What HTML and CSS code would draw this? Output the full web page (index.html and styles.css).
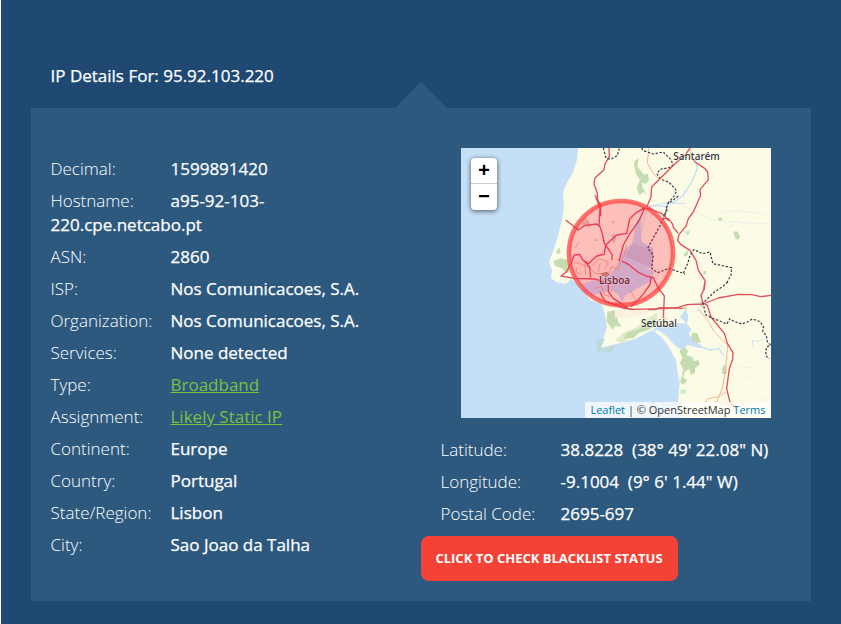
FILE: index.html
```html
<!DOCTYPE html>
<html lang="en">
<head>
<meta charset="utf-8">
<title>IP Details</title>
<link rel="stylesheet" href="styles.css">
</head>
<body>
<main class="page">
  <h1 class="title">IP Details For: 95.92.103.220</h1>
  <section class="panel">
    <div class="details">
      <p class="row"><span class="label">Decimal:</span><span>1599891420</span></p>
      <p class="row host"><span class="label">Hostname:</span><span>a95-92-103-</span><wbr><span>220.cpe.netcabo.pt</span></p>
      <p class="row"><span class="label">ASN:</span><span>2860</span></p>
      <p class="row"><span class="label">ISP:</span><span>Nos Comunicacoes, S.A.</span></p>
      <p class="row"><span class="label">Organization:</span><span>Nos Comunicacoes, S.A.</span></p>
      <p class="row"><span class="label">Services:</span><span>None detected</span></p>
      <p class="row"><span class="label">Type:</span><a href="#">Broadband</a></p>
      <p class="row"><span class="label">Assignment:</span><a href="#">Likely Static IP</a></p>
      <p class="row"><span class="label">Continent:</span><span>Europe</span></p>
      <p class="row"><span class="label">Country:</span><span>Portugal</span></p>
      <p class="row"><span class="label">State/Region:</span><span>Lisbon</span></p>
      <p class="row"><span class="label">City:</span><span>Sao Joao da Talha</span></p>
    </div>
    <div class="location">
      <div class="map">
        <svg class="tiles" viewBox="461 148 310 270" width="310" height="270">
          <rect class="water" x="461" y="148" width="310" height="270"/>
          <path class="land" d="M578 148L577 160L573 172L569 179L564 189L563 194L564 204L562 220L558 235L555 246L549 262L552 270L551 278L556 282L566 284L571 279L578 284L590 300L602 304L605 315L607 327L603 340L599 348L604 347L616 344L635 339L652 330L658 334L665 340L672 347L677 357L680 379L678 402L682 418H771V148Z"/>
          <!-- west: coast, Tagus estuary and Lisbon -->
          <g transform="translate(545 195) scale(.33333)">
            <path class="shoal" d="M155 432h24l-12 28 42-8-8 20h-46z"/>
            <path class="land suburb" d="M78 190L95 178L125 180L160 200L230 190L235 215L200 240L170 258L120 262L85 248Z"/>
            <path class="water" d="M110 268L165 250L195 240L222 200L232 170L262 145L270 100L276 75L290 65L288 100L290 140L325 160L322 218L290 222L327 225L322 255L300 268L280 278L262 290L240 300L232 320L218 298L205 290L170 292L150 300L120 298Z"/>
            <path class="flats" d="M262 145L325 165L322 218L240 185Z"/>
            <path class="park" d="M25 198L48 190L70 196L72 230L64 236L55 222L30 212ZM36 165L43 158L47 172L40 178L34 174ZM187 350L210 346L222 350L217 375L230 395L210 392L203 405L185 380Z"/>
            <path class="hills" d="M210 435L240 410L270 400L310 368L338 352L336 380L270 420L230 445Z"/>
            <path class="park" d="M235 430L248 412L275 405L315 380L338 381L333 392L310 405L282 413L265 430Z"/>
            <path class="scrub" d="M108 90L112 74L124 66L137 88L133 97L118 91ZM144 137L152 130L158 138ZM170 137L178 133L180 145ZM200 120L209 115L214 130L207 147L202 138ZM198 80L208 78L209 88Z"/>
            <path class="stream" d="M290 110L300 60L310 40L345 25L420 25"/>
            <path class="minor" d="M88 202L105 206L132 216L150 235L190 238L200 215L220 223L227 200L215 190M95 218L93 230L110 240M140 212L165 192L190 200L180 224M150 280L170 275L180 300L195 305M245 150L238 182L228 195M257 288L265 302L272 318L258 325M90 160L102 142M178 165L155 192M120 208L122 240M165 205L160 232"/>
            <path class="major" d="M62 75L100 105L118 92L155 87L165 95L173 120L177 143L190 162L202 180L200 195M230 198L250 208L280 232L303 243L325 248L340 280L358 303L355 370M150 0L165 38L162 92M300 38L275 52L254 72L245 115L215 120L182 150L178 178L155 183L130 206L113 195L104 178L88 180L78 205L65 230L48 243L88 250L150 252L190 267L190 290L205 310L238 332L248 338M300 38L280 80L253 118L235 150L222 198M302 38L350 55L372 78M115 195L134 216L137 248M165 290L172 305L180 318L235 340L270 344L330 344L345 338L420 340M258 335L272 323L296 296L315 268L318 248"/>
            <path class="border" d="M400 3L365 30L362 56L345 92L308 160L325 180L320 220L338 233L372 220L420 237"/>
            <path class="city" d="M168 234L188 230L194 240L184 244L170 243Z"/>
          </g>
          <!-- north -->
          <g transform="translate(580 148) scale(.33333)">
            <path class="park" d="M162 52L164 40L176 30L172 55L180 66L192 80L204 77L207 96L196 108L185 103L188 120L201 140L190 132L178 142L170 118L180 95L169 80Z"/>
            <path class="major" d="M87 0L88 25L75 48L72 65L45 90L42 108L52 135L53 155L62 172L62 205"/>
            <path class="minor" d="M207 0L202 45L220 77L237 93"/>
            <path class="border" d="M70 0L78 30L92 34L112 23L118 0M185 0L190 8L220 18L250 12L270 32L280 50L268 59L240 64L231 78L243 94L267 103L290 128L282 145L263 166L260 190L249 205"/>
          </g>
          <!-- east -->
          <g transform="translate(615 147) scale(.33333)">
            <path class="river" d="M242 38L247 65L230 105L205 145L190 157L150 178L115 175L95 182"/>
            <path class="stream faint" d="M190 165L230 190L290 218L350 225L470 232M210 100L207 165M305 200L370 190L450 202M300 280L345 238L380 210"/>
            <path class="park" d="M206 322L220 308L218 325L206 329ZM309 212L322 212L321 221L311 222ZM355 254L366 253L375 267L370 279L361 274ZM265 372L273 372L273 382L265 381Z"/>
            <path class="major" d="M225 3L210 25L180 50L140 90L110 120L108 150L95 180M233 35L240 45L270 65L278 75L280 98L255 128L257 145L235 195L220 215L213 238L192 262L188 280L197 292L225 310L243 340L250 370L270 400L266 430M145 215L160 215L172 230L176 243L189 258"/>
            <path class="minor" d="M225 3L229 35L240 46"/>
            <path class="grove" d="M210 254L222 249L225 260L215 266Z"/>
            <path class="border" d="M205 378L218 350L225 325L237 308L262 320L285 315L294 350L350 362L348 385L335 408"/>
          </g>
          <!-- south and the Sado estuary -->
          <g transform="translate(615 282) scale(.33333)">
            <path class="land suburb" d="M0 82L35 85L100 80L95 95L40 108L0 106Z"/>
            <path class="water" d="M112 144L130 132L160 128L185 133L185 122L215 125L195 105L212 82L220 102L216 125L229 142L222 157L240 179L263 193L256 199L216 188L207 206L186 196L160 170L138 151Z"/>
            <path class="sand" d="M120 147L128 143L161 168L184 207L195 245L194 300L190 286L183 235L162 195L140 165Z"/>
            <path class="park" d="M230 151L248 155L257 181L245 184L230 177ZM193 207L207 197L220 207L214 220L232 226L237 238L250 234L254 248L240 258L240 272L228 278L222 260L208 270L205 286L216 296L205 308L195 300L200 285L205 262L195 242L203 228ZM326 250L334 250L335 276L322 276L320 264ZM254 60L264 54L264 74L256 74ZM200 80L215 76L217 83Z"/>
            <path class="grove" d="M196 324L212 322L212 334L198 335Z"/>
            <path class="river" d="M255 194L285 204L312 200L325 220"/>
            <path class="stream faint" d="M325 220L350 240L380 260L412 255M312 200L318 190L335 210M398 288L415 285M462 360L440 345M205 70L280 58"/>
            <path class="stream" d="M414 195L412 175L426 180L440 172"/>
            <path class="minor" d="M249 80L270 105L285 125L294 145L338 190L332 260L323 315L305 360M267 365L278 350L308 345L333 330M145 103L158 115L160 124M332 392L350 370L310 360"/>
            <path class="major" d="M0 66L22 74L50 82L148 80L190 76L216 68L264 66L310 48L370 37L410 38L437 44L471 40M270 0L268 20L258 40L264 63L277 70L288 105L328 154L337 184L354 212L353 232L343 260L335 320L345 361L365 380"/>
            <path class="border" d="M338 0L325 12L298 30L264 63L272 98L290 108L312 116L335 126L345 110L357 118L380 126L397 120L412 111L436 119L446 137L443 149L454 160L457 180L467 189L454 196L452 221L463 230"/>
          </g>
          <text x="614.5" y="284">Lisboa</text>
          <circle cx="621" cy="253" r="52"/>
          <text x="696.5" y="160">Santarém</text>
          <text x="659" y="326.5">Setúbal</text>
        </svg>
        <div class="zoom"><button>+</button><button>−</button></div>
        <div class="credit"><a>Leaflet</a> | © OpenStreetMap <a>Terms</a></div>
      </div>
      <p class="row"><span class="label">Latitude:</span><span>38.8228&nbsp; (38° 49' 22.08" N)</span></p>
      <p class="row"><span class="label">Longitude:</span><span>-9.1004&nbsp; (9° 6' 1.44" W)</span></p>
      <p class="row"><span class="label">Postal Code:</span><span>2695-697</span></p>
      <button class="check">CLICK TO CHECK BLACKLIST STATUS</button>
    </div>
  </section>
</main>
</body>
</html>
```
FILE: styles.css
```css
* { box-sizing: border-box; }
body { margin: 0; background: #fff; font-family: "Open Sans", sans-serif; color: #fff; }
.page { margin-left: 1px; height: 624px; padding: 64px 30px 0; background: #1f4972; overflow: hidden; }
.title { margin: 0 0 20px 19.5px; font-size: 17px; line-height: 24px; font-weight: 400; -webkit-text-stroke: .25px #fff; }
.panel { position: relative; display: grid; grid-template-columns: 390px 390px; height: 493px; padding-top: 40px; background: #2d597f; }
.panel::before { content: ""; position: absolute; left: 364px; top: -26px; width: 52px; height: 26px; background: #2d597f; clip-path: polygon(50% 0, 100% 100%, 0 100%); }
.details { padding: 9px 0 0 19.5px; }
.row { margin: 0 0 8px; font-size: 17px; line-height: 24px; font-weight: 500; white-space: nowrap; -webkit-text-stroke: .25px #fff; }
.label { display: inline-block; width: 120px; font-weight: 300; -webkit-text-stroke: 0; }
.host { width: 230px; white-space: normal; }
.row a { color: #7fbf3f; font-weight: 400; text-decoration: underline; -webkit-text-stroke: 0; }
.location .row { margin-left: 19.5px; }
.map { position: relative; width: 310px; height: 270px; margin: 0 0 20px 40px; }
.tiles { display: block; }
.tiles path { fill: none; stroke-linejoin: round; }
.tiles .water { fill: #c5dff6; }
.tiles .land { fill: #fcfbe5; }
.tiles .suburb { fill: #fcf0e0; }
.tiles .sand { fill: #fcfbe5; }
.tiles .park { fill: #c5dbb0; }
.tiles .grove { fill: #c3ecc4; }
.tiles .hills { fill: #e3ebcb; }
.tiles .flats { fill: #b5c3d6; fill-opacity: .6; }
.tiles .scrub { fill: #bca98c; fill-opacity: .5; }
.tiles .shoal { fill: #bcd9dc; }
.tiles .stream { stroke: #c5dff6; stroke-width: 2.5; }
.tiles .faint { stroke-opacity: .4; }
.tiles .river { stroke: #c5dff6; stroke-width: 4; }
.tiles .minor { stroke: #f0ad85; stroke-width: 2.6; }
.tiles .major { stroke: #e0505a; stroke-width: 4; }
.tiles .border { stroke: #3d3850; stroke-width: 3.6; stroke-dasharray: 7 5; }
.tiles .city { fill: #b89a80; }
.tiles circle { fill: #f03; fill-opacity: .24; stroke: #f33; stroke-opacity: .68; stroke-width: 4.6; }
.tiles text { font: 500 10px "Noto Sans", sans-serif; fill: #333; text-anchor: middle; stroke: #fff; stroke-opacity: .5; stroke-width: 1.5px; paint-order: stroke; }
.zoom { position: absolute; left: 10px; top: 10px; width: 26px; border-radius: 4px; background: #fff; box-shadow: 0 1px 5px rgba(0,0,0,.65); }
.zoom button { display: block; width: 26px; height: 26px; padding: 1px 0 0; border: 0; background: none; font: bold 20px/25px "Liberation Mono", monospace; color: #000; }
.zoom button:first-child { border-bottom: 1px solid #ccc; }
.credit { position: absolute; right: 0; bottom: 0; padding: 0 5.5px; background: rgba(255,255,255,.7); font-size: 11px; line-height: 16px; color: #333; }
.credit a { color: #0078a8; }
.check { display: block; width: 257px; height: 45px; margin-top: 10px; padding: 0 1px 2px 0; border: 0; border-radius: 8px; background: #f44336; color: #fff; font: 700 13px "Open Sans", sans-serif; }
```
